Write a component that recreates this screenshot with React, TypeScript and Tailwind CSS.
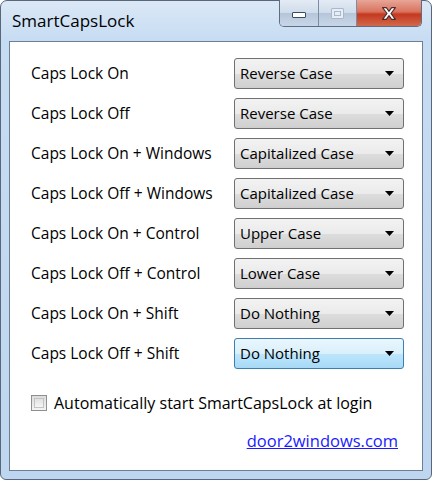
import React from "react";

const rows = [
  { label: "Caps Lock On", value: "Reverse Case" },
  { label: "Caps Lock Off", value: "Reverse Case" },
  { label: "Caps Lock On + Windows", value: "Capitalized Case" },
  { label: "Caps Lock Off + Windows", value: "Capitalized Case" },
  { label: "Caps Lock On + Control", value: "Upper Case" },
  { label: "Caps Lock Off + Control", value: "Lower Case" },
  { label: "Caps Lock On + Shift", value: "Do Nothing" },
  { label: "Caps Lock Off + Shift", value: "Do Nothing", hover: true },
];

function Select({ value, hover }: { value: string; hover?: boolean }) {
  return (
    <div
      className={
        "flex h-[31px] w-[170px] items-center justify-between rounded-[3px] border pl-[5px] pr-[9px] " +
        (hover
          ? "border-[#3c7fb1] bg-[linear-gradient(#eaf6fd_0%,#d9f0fc_50%,#bee6fd_51%,#a7d9f5_100%)]"
          : "border-[#707070] bg-[linear-gradient(#f2f2f2_0%,#ebebeb_50%,#dddddd_51%,#cfcfcf_100%)]")
      }
    >
      <span className="text-[15px] text-black">{value}</span>
      <svg width="9" height="5" viewBox="0 0 9 5">
        <path d="M0 0h9L4.5 5z" fill="#000" />
      </svg>
    </div>
  );
}

export default function App() {
  return (
    <div
      className="flex h-[480px] w-[432px] flex-col rounded-t-[7px] rounded-b-[6px] border border-[#58687a] bg-[linear-gradient(180deg,#dbe8f6_0%,#c6dcf3_40px,#bfd6f0_100%)] px-[8px] pb-[8px]"
      style={{ fontFamily: '"Open Sans", "Noto Sans", sans-serif' }}
    >
      {/* title bar */}
      <div className="relative flex h-[40px] shrink-0 items-start">
        <span className="ml-[3px] mt-[7px] text-[17px] text-black">SmartCapsLock</span>
        <div className="absolute right-[1px] top-[-1px] flex h-[27px] overflow-hidden rounded-b-[5px] border border-t-0 border-[#5d6e84]">
          <div className="flex w-[39px] items-center justify-center border-r border-[#7b8ca3] bg-[linear-gradient(#e3ebf5_0%,#d0dcea_50%,#b6c6da_51%,#c8d6e8_100%)]">
            <div className="mt-[4px] h-[6px] w-[14px] rounded-[1px] border border-[#3c4c60] bg-white" />
          </div>
          <div className="flex w-[38px] items-center justify-center border-r border-[#7b8ca3] bg-[linear-gradient(#e3ebf5_0%,#d0dcea_50%,#b6c6da_51%,#c8d6e8_100%)]">
            <div className="flex h-[11px] w-[13px] items-center justify-center rounded-[1px] border border-[#a9b8ca] bg-[#e6edf5]">
              <div className="h-[5px] w-[7px] border border-[#a9b8ca]" />
            </div>
          </div>
          <div className="flex w-[64px] items-center justify-center bg-[linear-gradient(#e8a597_0%,#d9735f_45%,#c4391f_55%,#d2694b_100%)]">
            <svg width="18" height="15" viewBox="0 0 16 14">
              <path
                d="M2 1.5h3.5L8 5l2.5-3.5H14L9.8 7 14 12.5h-3.5L8 9l-2.5 3.5H2L6.2 7z"
                fill="#fff"
                stroke="#4a2a2a"
                strokeWidth="1"
                strokeLinejoin="round"
              />
            </svg>
          </div>
        </div>
      </div>

      {/* client area */}
      <div className="flex flex-1 flex-col border border-[#6f7f92] bg-white pl-[21px] pr-[18px] pt-[16px]">
        <div className="flex flex-col gap-[9px]">
          {rows.map((r, i) => (
            <div key={i} className="flex items-center justify-between">
              <span className="text-[15.5px] text-black">{r.label}</span>
              <Select value={r.value} hover={r.hover} />
            </div>
          ))}
        </div>

        <div className="mt-[22px] flex items-center gap-[7px]">
          <div className="flex h-[16px] w-[16px] items-center justify-center border border-[#8e8f8f] bg-[linear-gradient(#dcdcdc,#f4f4f4)]">
            <div className="h-[10px] w-[10px] border border-[#c4c4c4] bg-[linear-gradient(#e0e0e0,#f6f6f6)]" />
          </div>
          <span className="text-[16px] text-black">
            Automatically start SmartCapsLock at login
          </span>
        </div>

        <div className="mt-[14px] flex justify-end pr-[6px]">
          <a href="#" className="text-[16.5px] text-[#1a1aff] underline">
            door2windows.com
          </a>
        </div>
      </div>
    </div>
  );
}
